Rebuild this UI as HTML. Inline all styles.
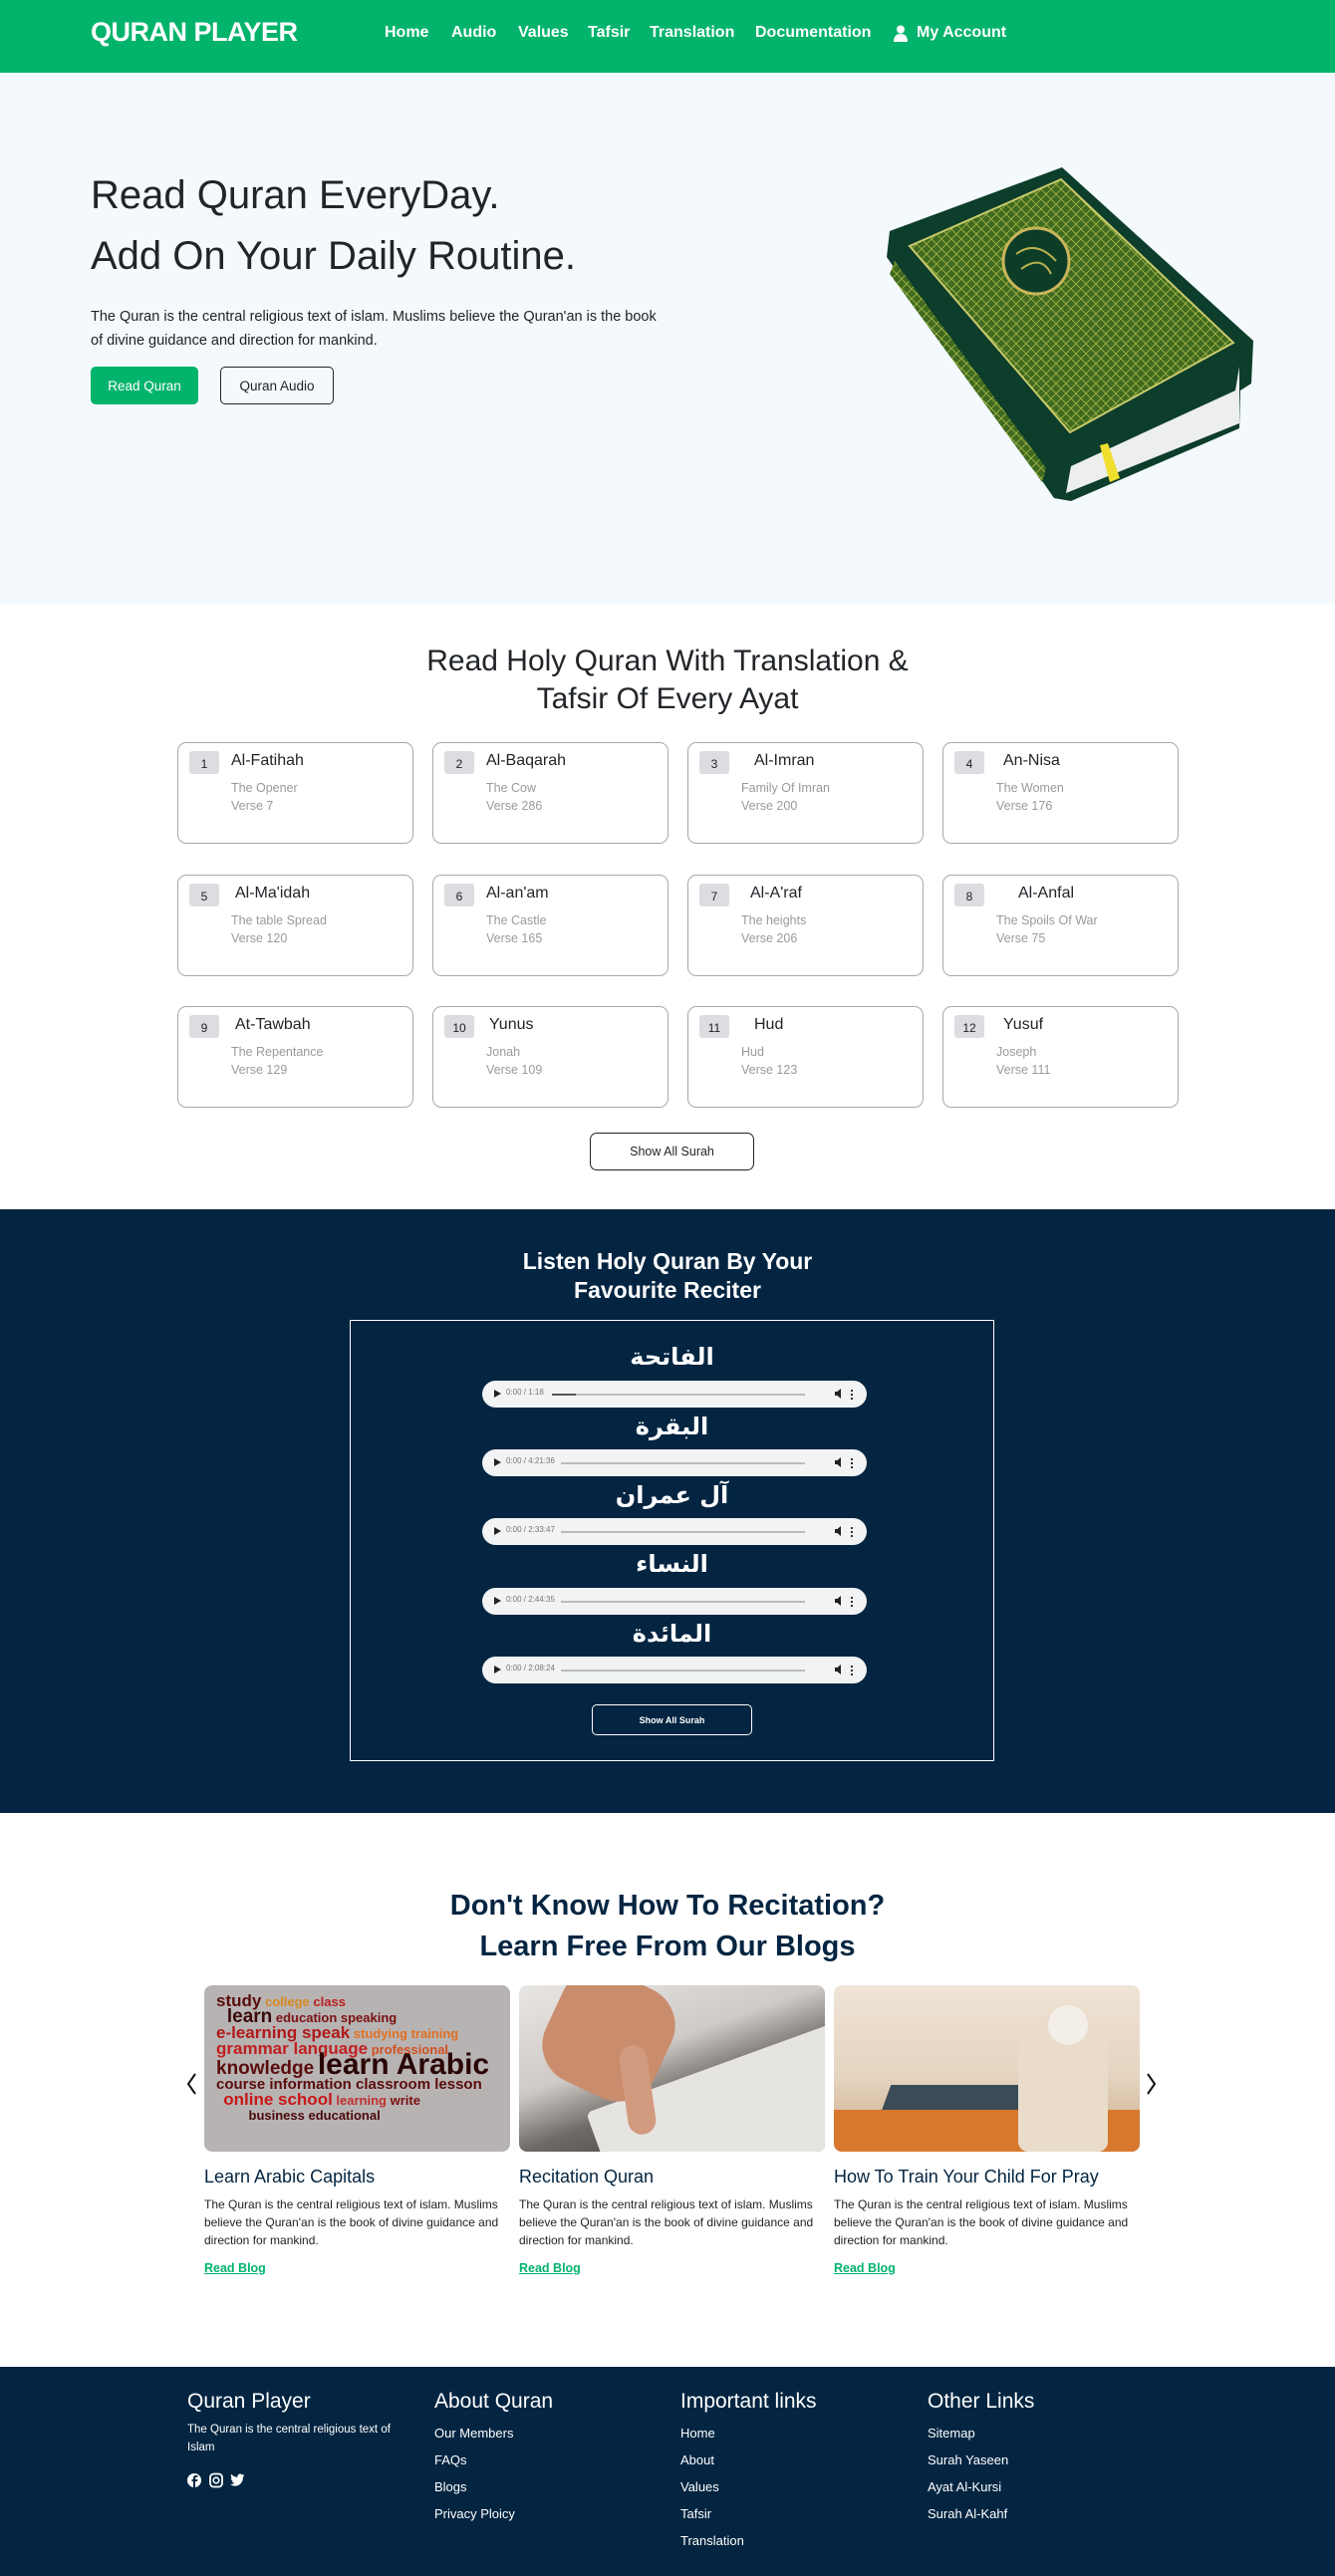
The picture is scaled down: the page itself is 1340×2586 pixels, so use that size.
<!DOCTYPE html>
<html><head><meta charset="utf-8">
<style>
*{margin:0;padding:0;box-sizing:border-box}
body{width:1340px;height:2586px;font-family:"Liberation Sans",sans-serif;color:#212529;background:#fff;position:relative;overflow:hidden}
.abs{position:absolute}
nav{position:absolute;left:0;top:0;width:1340px;height:73px;background:#02b36c}
.logo{left:91px;top:17px;color:#fff;font-weight:bold;font-size:27px;letter-spacing:-0.5px}
.nl{top:24px;color:#fff;font-weight:bold;font-size:16px}
.hero{left:0;top:73px;width:1340px;height:534px;background:#f3f9fc}
h1{font-weight:normal;font-size:40px;line-height:61px;color:#212529}
.btn{border-radius:5px;font-size:13.5px;display:flex;align-items:center;justify-content:center}
.card{position:absolute;width:237px;height:102px;border:1.5px solid #a9a9ad;border-radius:9px;background:#fff}
.num{position:absolute;left:11px;top:8px;width:30px;height:23px;background:#dcdde1;border-radius:3px;font-size:12px;text-align:center;line-height:26px;color:#222}
.ct{position:absolute;top:9px;font-size:16px;color:#212529}
.cs{position:absolute;left:53px;font-size:12.5px;color:#9a9a9a}
.dark{left:0;top:1214px;width:1340px;height:606px;background:#032541}
.ar{position:absolute;left:351px;width:647px;text-align:center;color:#fff;font-size:24px;font-weight:bold;font-family:"DejaVu Sans",sans-serif}
.aud{position:absolute;left:484px;width:386px;height:27px;background:#f1f3f4;border-radius:14px}
.aud .p{position:absolute;left:12px;top:9px;width:0;height:0;border-left:7px solid #222;border-top:4.5px solid transparent;border-bottom:4.5px solid transparent}
.aud .t{position:absolute;left:24px;top:7px;font-size:8px;color:#777}
.aud .bar{position:absolute;top:13px;right:62px;height:2px;background:#bbb}
.aud .v{position:absolute;right:26px;top:8px;width:6px;height:10px;background:#222;clip-path:polygon(0 30%,40% 30%,100% 0,100% 100%,40% 70%,0 70%)}
.aud .d{position:absolute;right:14px;top:8px;width:2px;height:11px;background:radial-gradient(circle,#222 1px,transparent 1.2px) 0 0/2px 4px}
.bimg{position:absolute;top:1993px;width:307px;height:167px;border-radius:8px;overflow:hidden}
.bt{position:absolute;top:2175px;font-size:18px;color:#032541}
.bp{position:absolute;top:2204px;width:300px;font-size:12px;line-height:18px;color:#222}
.rb{position:absolute;top:2270px;font-size:12.5px;font-weight:bold;color:#02b36c;text-decoration:underline}
.foot{left:0;top:2376px;width:1340px;height:210px;background:#032541;color:#fff}
.fh{position:absolute;top:2399px;font-size:21px;color:#fff}
.fl{position:absolute;font-size:13px;color:#fff}
</style></head><body>
<nav></nav>
<div class="abs logo">QURAN PLAYER</div>
<div class="abs nl" style="left:386px">Home</div>
<div class="abs nl" style="left:453px">Audio</div>
<div class="abs nl" style="left:520px">Values</div>
<div class="abs nl" style="left:590px">Tafsir</div>
<div class="abs nl" style="left:652px">Translation</div>
<div class="abs nl" style="left:758px">Documentation</div>
<svg class="abs" style="left:897px;top:25px" width="14" height="17" viewBox="0 0 14 17"><circle cx="7" cy="4.5" r="4" fill="#fff"/><path d="M0 17 Q0 9 7 9 Q14 9 14 17Z" fill="#fff"/></svg>
<div class="abs nl" style="left:920px">My Account</div>

<div class="abs hero"></div>
<h1 class="abs" style="left:91px;top:166px">Read Quran EveryDay.<br>Add On Your Daily Routine.</h1>
<div class="abs" style="left:91px;top:306px;font-size:14.5px;line-height:24px;width:580px;color:#222">The Quran is the central religious text of islam. Muslims believe the Quran'an is the book of divine guidance and direction for mankind.</div>
<div class="abs btn" style="left:91px;top:368px;width:108px;height:38px;background:#02b36c;color:#fff">Read Quran</div>
<div class="abs btn" style="left:221px;top:368px;width:114px;height:38px;border:1.5px solid #222;color:#222">Quran Audio</div>
<svg class="abs" style="left:0;top:0" width="1340" height="600" viewBox="0 0 1340 600">
<defs><pattern id="pt" width="10" height="10" patternUnits="userSpaceOnUse"><rect width="10" height="10" fill="#3f6a1f"/><path d="M0 5L5 0L10 5L5 10Z" fill="none" stroke="#a9b94a" stroke-width="0.8"/></pattern></defs>
<path d="M1066 168 L1258 342 L1256 385 L1245 392 L1244 430 L1075 503 L1058 500 L890 258 L893 232 Z" fill="#0d3d2b"/>
<path d="M1244 368 L1240 392 L1075 468 L1070 495 L1244 425 Z" fill="#ecefec"/>
<path d="M1065 180 L1238 344 L1074 434 L913 247 Z" fill="url(#pt)" stroke="#c7c96a" stroke-width="2"/>
<path d="M898 262 L1050 470 L1046 484 L893 275 Z" fill="url(#pt)"/>
<circle cx="1040" cy="262" r="33" fill="#0e3d27" stroke="#c9b65a" stroke-width="3"/>
<path d="M1020 255 Q1040 240 1060 262 M1025 270 Q1045 255 1055 275" stroke="#b9b050" stroke-width="2" fill="none"/>
<path d="M1104 447 L1112 445 L1124 480 L1114 484 Z" fill="#f0de2e"/>
</svg>

<div class="abs" style="left:0;top:645px;width:1340px;text-align:center;font-size:30px;line-height:38px;color:#212529">Read Holy Quran With Translation &amp;<br>Tafsir Of Every Ayat</div>

<div class="card" style="left:178px;top:745px"><div class="num">1</div><div class="ct" style="left:53px">Al-Fatihah</div><div class="cs" style="top:38px">The Opener</div><div class="cs" style="top:56px">Verse 7</div></div>
<div class="card" style="left:434px;top:745px"><div class="num">2</div><div class="ct" style="left:53px">Al-Baqarah</div><div class="cs" style="top:38px">The Cow</div><div class="cs" style="top:56px">Verse 286</div></div>
<div class="card" style="left:690px;top:745px"><div class="num">3</div><div class="ct" style="left:66px">Al-Imran</div><div class="cs" style="top:38px">Family Of Imran</div><div class="cs" style="top:56px">Verse 200</div></div>
<div class="card" style="left:946px;top:745px"><div class="num">4</div><div class="ct" style="left:60px">An-Nisa</div><div class="cs" style="top:38px">The Women</div><div class="cs" style="top:56px">Verse 176</div></div>

<div class="card" style="left:178px;top:878px"><div class="num">5</div><div class="ct" style="left:57px">Al-Ma'idah</div><div class="cs" style="top:38px">The table Spread</div><div class="cs" style="top:56px">Verse 120</div></div>
<div class="card" style="left:434px;top:878px"><div class="num">6</div><div class="ct" style="left:53px">Al-an'am</div><div class="cs" style="top:38px">The Castle</div><div class="cs" style="top:56px">Verse 165</div></div>
<div class="card" style="left:690px;top:878px"><div class="num">7</div><div class="ct" style="left:62px">Al-A'raf</div><div class="cs" style="top:38px">The heights</div><div class="cs" style="top:56px">Verse 206</div></div>
<div class="card" style="left:946px;top:878px"><div class="num">8</div><div class="ct" style="left:75px">Al-Anfal</div><div class="cs" style="top:38px">The Spoils Of War</div><div class="cs" style="top:56px">Verse 75</div></div>

<div class="card" style="left:178px;top:1010px"><div class="num">9</div><div class="ct" style="left:57px">At-Tawbah</div><div class="cs" style="top:38px">The Repentance</div><div class="cs" style="top:56px">Verse 129</div></div>
<div class="card" style="left:434px;top:1010px"><div class="num">10</div><div class="ct" style="left:56px">Yunus</div><div class="cs" style="top:38px">Jonah</div><div class="cs" style="top:56px">Verse 109</div></div>
<div class="card" style="left:690px;top:1010px"><div class="num">11</div><div class="ct" style="left:66px">Hud</div><div class="cs" style="top:38px">Hud</div><div class="cs" style="top:56px">Verse 123</div></div>
<div class="card" style="left:946px;top:1010px"><div class="num">12</div><div class="ct" style="left:60px">Yusuf</div><div class="cs" style="top:38px">Joseph</div><div class="cs" style="top:56px">Verse 111</div></div>

<div class="abs btn" style="left:592px;top:1137px;width:165px;height:38px;border:1.5px solid #222;border-radius:7px;font-size:12.5px">Show All Surah</div>

<div class="abs dark"></div>
<div class="abs" style="left:0;top:1252px;width:1340px;text-align:center;color:#fff;font-size:23px;line-height:29px;font-weight:bold">Listen Holy Quran By Your<br>Favourite Reciter</div>
<div class="abs" style="left:351px;top:1325px;width:647px;height:443px;border:1.5px solid #fff"></div>

<div class="ar" style="top:1348px">الفاتحة</div>
<div class="aud" style="top:1386px"><div class="p"></div><div class="t">0:00 / 1:18</div><div class="bar" style="left:70px"></div><div class="abs" style="left:70px;top:13px;width:24px;height:2px;background:#555"></div><div class="v"></div><div class="d"></div></div>
<div class="ar" style="top:1418px">البقرة</div>
<div class="aud" style="top:1455px"><div class="p"></div><div class="t">0:00 / 4:21:36</div><div class="bar" style="left:79px"></div><div class="v"></div><div class="d"></div></div>
<div class="ar" style="top:1487px">آل عمران</div>
<div class="aud" style="top:1524px"><div class="p"></div><div class="t">0:00 / 2:33:47</div><div class="bar" style="left:79px"></div><div class="v"></div><div class="d"></div></div>
<div class="ar" style="top:1556px">النساء</div>
<div class="aud" style="top:1594px"><div class="p"></div><div class="t">0:00 / 2:44:35</div><div class="bar" style="left:79px"></div><div class="v"></div><div class="d"></div></div>
<div class="ar" style="top:1626px">المائدة</div>
<div class="aud" style="top:1663px"><div class="p"></div><div class="t">0:00 / 2:08:24</div><div class="bar" style="left:79px"></div><div class="v"></div><div class="d"></div></div>
<div class="abs btn" style="left:594px;top:1711px;width:161px;height:31px;border:1.5px solid #fff;color:#fff;font-size:9px;font-weight:bold">Show All Surah</div>

<div class="abs" style="left:0;top:1893px;width:1340px;text-align:center;color:#032541;font-size:29px;line-height:41px;font-weight:bold">Don't Know How To Recitation?<br>Learn Free From Our Blogs</div>

<div class="bimg" style="left:205px;background:#b8b3b3">
<div class="abs" style="left:12px;top:8px;width:290px;font-family:'Liberation Sans Narrow','Liberation Sans',sans-serif;line-height:15px;color:#7a1010;font-size:13px;font-weight:bold">
<span style="color:#5a0c0c;font-size:17px">study</span> <span style="color:#d68a20">college</span> <span style="color:#b22">class</span><br>
&nbsp;&nbsp;&nbsp;<span style="color:#3a0808;font-size:19px">learn</span> education speaking<br>
<span style="color:#b01818;font-size:17px">e-learning speak</span> <span style="color:#e07020">studying training</span><br>
<span style="color:#c02020;font-size:17px">grammar language</span> <span style="color:#d05020">professional</span><br>
<span style="color:#5a0c0c;font-size:19px">knowledge</span> <span style="color:#2a0505;font-size:30px">learn Arabic</span><br>
<span style="color:#5a0c0c;font-size:15px">course information classroom lesson</span><br>
&nbsp;&nbsp;<span style="color:#c81818;font-size:17px">online school</span> <span style="color:#c03030">learning</span> write<br>
&nbsp;&nbsp;&nbsp;&nbsp;&nbsp;&nbsp;&nbsp;&nbsp;&nbsp;<span style="color:#4a0a0a">business educational</span></div></div>
<div class="bimg" style="left:521px;background:linear-gradient(160deg,#e8e6e4 0%,#cfcac6 40%,#6f6a66 60%,#2a2a2a 100%)">
<div class="abs" style="left:80px;top:80px;width:260px;height:120px;background:#e6e4e0;transform:rotate(-20deg);border-radius:6px"></div>
<div class="abs" style="left:30px;top:-10px;width:120px;height:120px;background:#c98c6c;border-radius:40px;transform:rotate(25deg)"></div>
<div class="abs" style="left:105px;top:60px;width:28px;height:90px;background:#d29a7e;border-radius:14px;transform:rotate(-8deg)"></div></div>
<div class="bimg" style="left:837px;background:linear-gradient(180deg,#efe4d6 0%,#e5d4c0 55%,#c9a883 100%)">
<div class="abs" style="left:50px;top:100px;width:200px;height:40px;background:#3b4c58;transform:skewX(-20deg)"></div>
<div class="abs" style="left:0;top:125px;width:307px;height:42px;background:#d8782e"></div>
<div class="abs" style="left:185px;top:30px;width:90px;height:137px;background:#e9dccb;border-radius:40px 40px 10px 10px"></div>
<div class="abs" style="left:215px;top:20px;width:40px;height:40px;background:#f3efe8;border-radius:50%"></div></div>
<svg class="abs" style="left:186px;top:2080px" width="12" height="24" viewBox="0 0 12 24"><path d="M10 2L3 12L10 22" stroke="#111" stroke-width="2" fill="none"/></svg>
<svg class="abs" style="left:1150px;top:2080px" width="12" height="24" viewBox="0 0 12 24"><path d="M2 2L9 12L2 22" stroke="#111" stroke-width="2" fill="none"/></svg>

<div class="bt" style="left:205px">Learn Arabic Capitals</div>
<div class="bt" style="left:521px">Recitation Quran</div>
<div class="bt" style="left:837px">How To Train Your Child For Pray</div>
<div class="bp" style="left:205px">The Quran is the central religious text of islam. Muslims believe the Quran'an is the book of divine guidance and direction for mankind.</div>
<div class="bp" style="left:521px">The Quran is the central religious text of islam. Muslims believe the Quran'an is the book of divine guidance and direction for mankind.</div>
<div class="bp" style="left:837px">The Quran is the central religious text of islam. Muslims believe the Quran'an is the book of divine guidance and direction for mankind.</div>
<div class="rb" style="left:205px">Read Blog</div>
<div class="rb" style="left:521px">Read Blog</div>
<div class="rb" style="left:837px">Read Blog</div>

<div class="abs foot"></div>
<div class="fh" style="left:188px">Quran Player</div>
<div class="fl" style="left:188px;top:2430px;font-size:11.5px;line-height:18px;width:230px">The Quran is the central religious text of Islam</div>
<svg class="abs" style="left:188px;top:2482px" width="75" height="16" viewBox="0 0 75 16">
<circle cx="7" cy="8" r="7" fill="#fff"/><path d="M8 16V9h2l.4-2H8V5.8c0-.6.3-1 1-1h1.4V3H8.6C6.8 3 6 4 6 5.6V7H4.5v2H6v7z" fill="#032541"/>
<rect x="23" y="1.5" width="12" height="13" rx="3.5" fill="none" stroke="#fff" stroke-width="1.8"/><circle cx="29" cy="8" r="2.8" fill="none" stroke="#fff" stroke-width="1.6"/>
<path d="M44 12.5c5 3 12 0 12-8l1.5-1.5-1.8.3 1.3-1.6-2 .6c-1.8-1.8-5-.6-4.6 2.4-2.6 0-4.8-1.3-6.2-3-.9 1.6-.2 3.4 1 4.2l-1.5-.3c0 1.5 1 2.6 2.4 2.9l-1.4.1c.4 1.2 1.6 2 2.8 2-1.2 1-3 1.5-4.5 1.3z" fill="#fff"/>
</svg>
<div class="fh" style="left:436px">About Quran</div>
<div class="fl" style="left:436px;top:2435px">Our Members</div>
<div class="fl" style="left:436px;top:2462px">FAQs</div>
<div class="fl" style="left:436px;top:2489px">Blogs</div>
<div class="fl" style="left:436px;top:2516px">Privacy Ploicy</div>
<div class="fh" style="left:683px">Important links</div>
<div class="fl" style="left:683px;top:2435px">Home</div>
<div class="fl" style="left:683px;top:2462px">About</div>
<div class="fl" style="left:683px;top:2489px">Values</div>
<div class="fl" style="left:683px;top:2516px">Tafsir</div>
<div class="fl" style="left:683px;top:2543px">Translation</div>
<div class="fh" style="left:931px">Other Links</div>
<div class="fl" style="left:931px;top:2435px">Sitemap</div>
<div class="fl" style="left:931px;top:2462px">Surah Yaseen</div>
<div class="fl" style="left:931px;top:2489px">Ayat Al-Kursi</div>
<div class="fl" style="left:931px;top:2516px">Surah Al-Kahf</div>
</body></html>
